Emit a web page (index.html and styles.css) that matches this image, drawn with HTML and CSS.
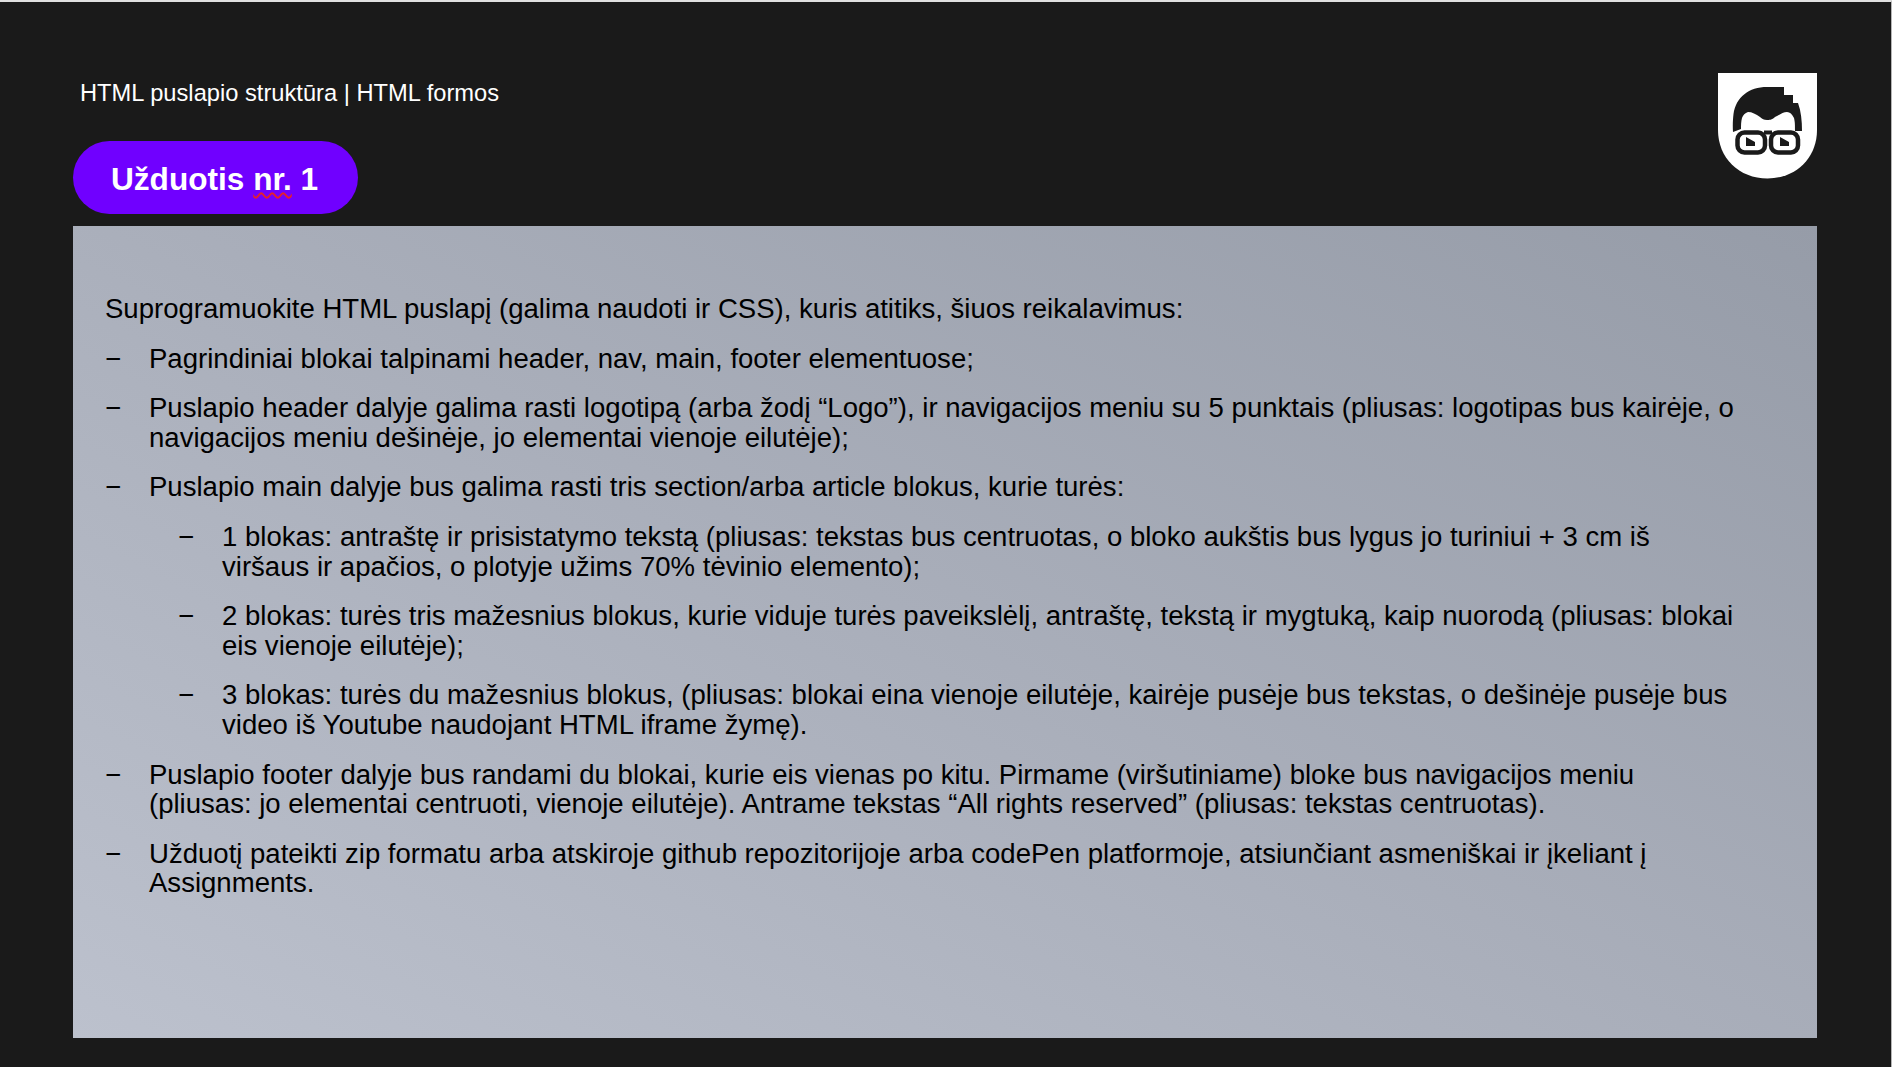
FILE: index.html
```html
<!DOCTYPE html>
<html lang="lt">
<head>
<meta charset="utf-8">
<title>Užduotis nr. 1</title>
<link rel="stylesheet" href="styles.css">
</head>
<body>
<div class="slide">
  <header class="top">
    <div class="heading">
      <p class="crumb">HTML puslapio struktūra | HTML formos</p>
      <h1 class="pill">Užduotis <span class="typo">nr.</span> 1</h1>
    </div>
    <svg class="logo" viewBox="0 0 99 106" aria-hidden="true">
      <path class="shield" d="M0 0H99V57C99 85 78 105.500 49.500 105.500C21 105.500 0 85 0 57Z"/>
      <path class="ink" d="M15 59C14.500 52 15 45 15.500 41C18 24 31 14 49 14H66V22H75V30H80C83 38 84 48 84 58H77C77 52 77 49 76 45C74 41 72 39 69 39C65 39 61 42 57 44C54 47 51 47 49 47C46 47 44 46 42 44C38 41 34 39 30 39C27 40 25 42 24 45C23 49 23 52 23 56Z"/>
      <rect class="lens" x="19.500" y="59.500" width="27.500" height="20" rx="7"/>
      <rect class="lens" x="53" y="59.500" width="27" height="20" rx="7"/>
      <rect class="ink" x="46" y="57.500" width="8" height="4"/>
      <path class="ink" d="M28 64L37 69V73H28Z M62 64L71 69V73H62Z"/>
    </svg>
  </header>
  <main class="panel">
    <p class="lead">Suprogramuokite HTML puslapį (galima naudoti ir CSS), kuris atitiks, šiuos reikalavimus:</p>
    <ul class="list">
      <li>Pagrindiniai blokai talpinami header, nav, main, footer elementuose;</li>
      <li>Puslapio header dalyje galima rasti logotipą (arba žodį “Logo”), ir navigacijos meniu su 5 punktais (pliusas: logotipas bus kairėje, o<br>navigacijos meniu dešinėje, jo elementai vienoje eilutėje);</li>
      <li>Puslapio main dalyje bus galima rasti tris section/arba article blokus, kurie turės:</li>
    </ul>
    <ul class="list sub">
      <li>1 blokas: antraštę ir prisistatymo tekstą (pliusas: tekstas bus centruotas, o bloko aukštis bus lygus jo turiniui + 3 cm iš<br>viršaus ir apačios, o plotyje užims 70% tėvinio elemento);</li>
      <li>2 blokas: turės tris mažesnius blokus, kurie viduje turės paveikslėlį, antraštę, tekstą ir mygtuką, kaip nuorodą (pliusas: blokai<br>eis vienoje eilutėje);</li>
      <li>3 blokas: turės du mažesnius blokus, (pliusas: blokai eina vienoje eilutėje, kairėje pusėje bus tekstas, o dešinėje pusėje bus<br>video iš Youtube naudojant HTML iframe žymę).</li>
    </ul>
    <ul class="list">
      <li>Puslapio footer dalyje bus randami du blokai, kurie eis vienas po kitu. Pirmame (viršutiniame) bloke bus navigacijos meniu<br>(pliusas: jo elementai centruoti, vienoje eilutėje). Antrame tekstas “All rights reserved” (pliusas: tekstas centruotas).</li>
      <li>Užduotį pateikti zip formatu arba atskiroje github repozitorijoje arba codePen platformoje, atsiunčiant asmeniškai ir įkeliant į<br>Assignments.</li>
    </ul>
  </main>
</div>
</body>
</html>
```
FILE: styles.css
```css
* { box-sizing: border-box; }
html, body { margin: 0; height: 100%; }
body { background: #1a1a1a; overflow: hidden; font-family: "Liberation Sans", Arial, sans-serif; }
.slide {
  width: 1892px; height: 1067px;
  border-top: 2px solid #e0e0e0;
  border-right: 1px solid #b5b5b5;
  padding: 71px 74px 0 73px;
  display: flex; flex-direction: column;
}
.top { display: flex; justify-content: space-between; align-items: flex-start; height: 153px; }
.heading { display: flex; flex-direction: column; align-items: flex-start; }
.crumb { margin: 0 0 0 7px; color: #fff; font-size: 23.7px; line-height: 40px; height: 68px; }
.pill {
  margin: 0; width: 285px; height: 73px; border-radius: 37px;
  background: #7000ff; color: #fff;
  font-size: 31.6px; font-weight: 700; line-height: 77px; padding-left: 38px;
}
.typo {
  text-decoration: underline wavy #e5202a;
  text-decoration-thickness: 1.5px;
  text-decoration-skip-ink: none;
  text-underline-offset: 2px;
}
.logo { width: 99px; height: 106px; }
.shield { fill: #fff; }
.ink { fill: #1a1a1a; }
.lens { fill: #fff; stroke: #1a1a1a; stroke-width: 4.5; }
.panel {
  width: 1744px; height: 812px;
  background: linear-gradient(28deg, #bcc1cd 0%, #a9aeba 50%, #969ca8 100%);
  padding: 68px 32px 0;
  color: #000; font-size: 27.55px; line-height: 29.6px;
}
.lead { margin: 0 0 20px; }
.list { list-style: none; margin: 0; padding: 0 0 0 44px; }
.list li { position: relative; margin-bottom: 20px; }
.list li::before { content: "−"; position: absolute; left: -44px; }
.sub { padding-left: 117px; }
.sub li::before { left: -44px; }
```
